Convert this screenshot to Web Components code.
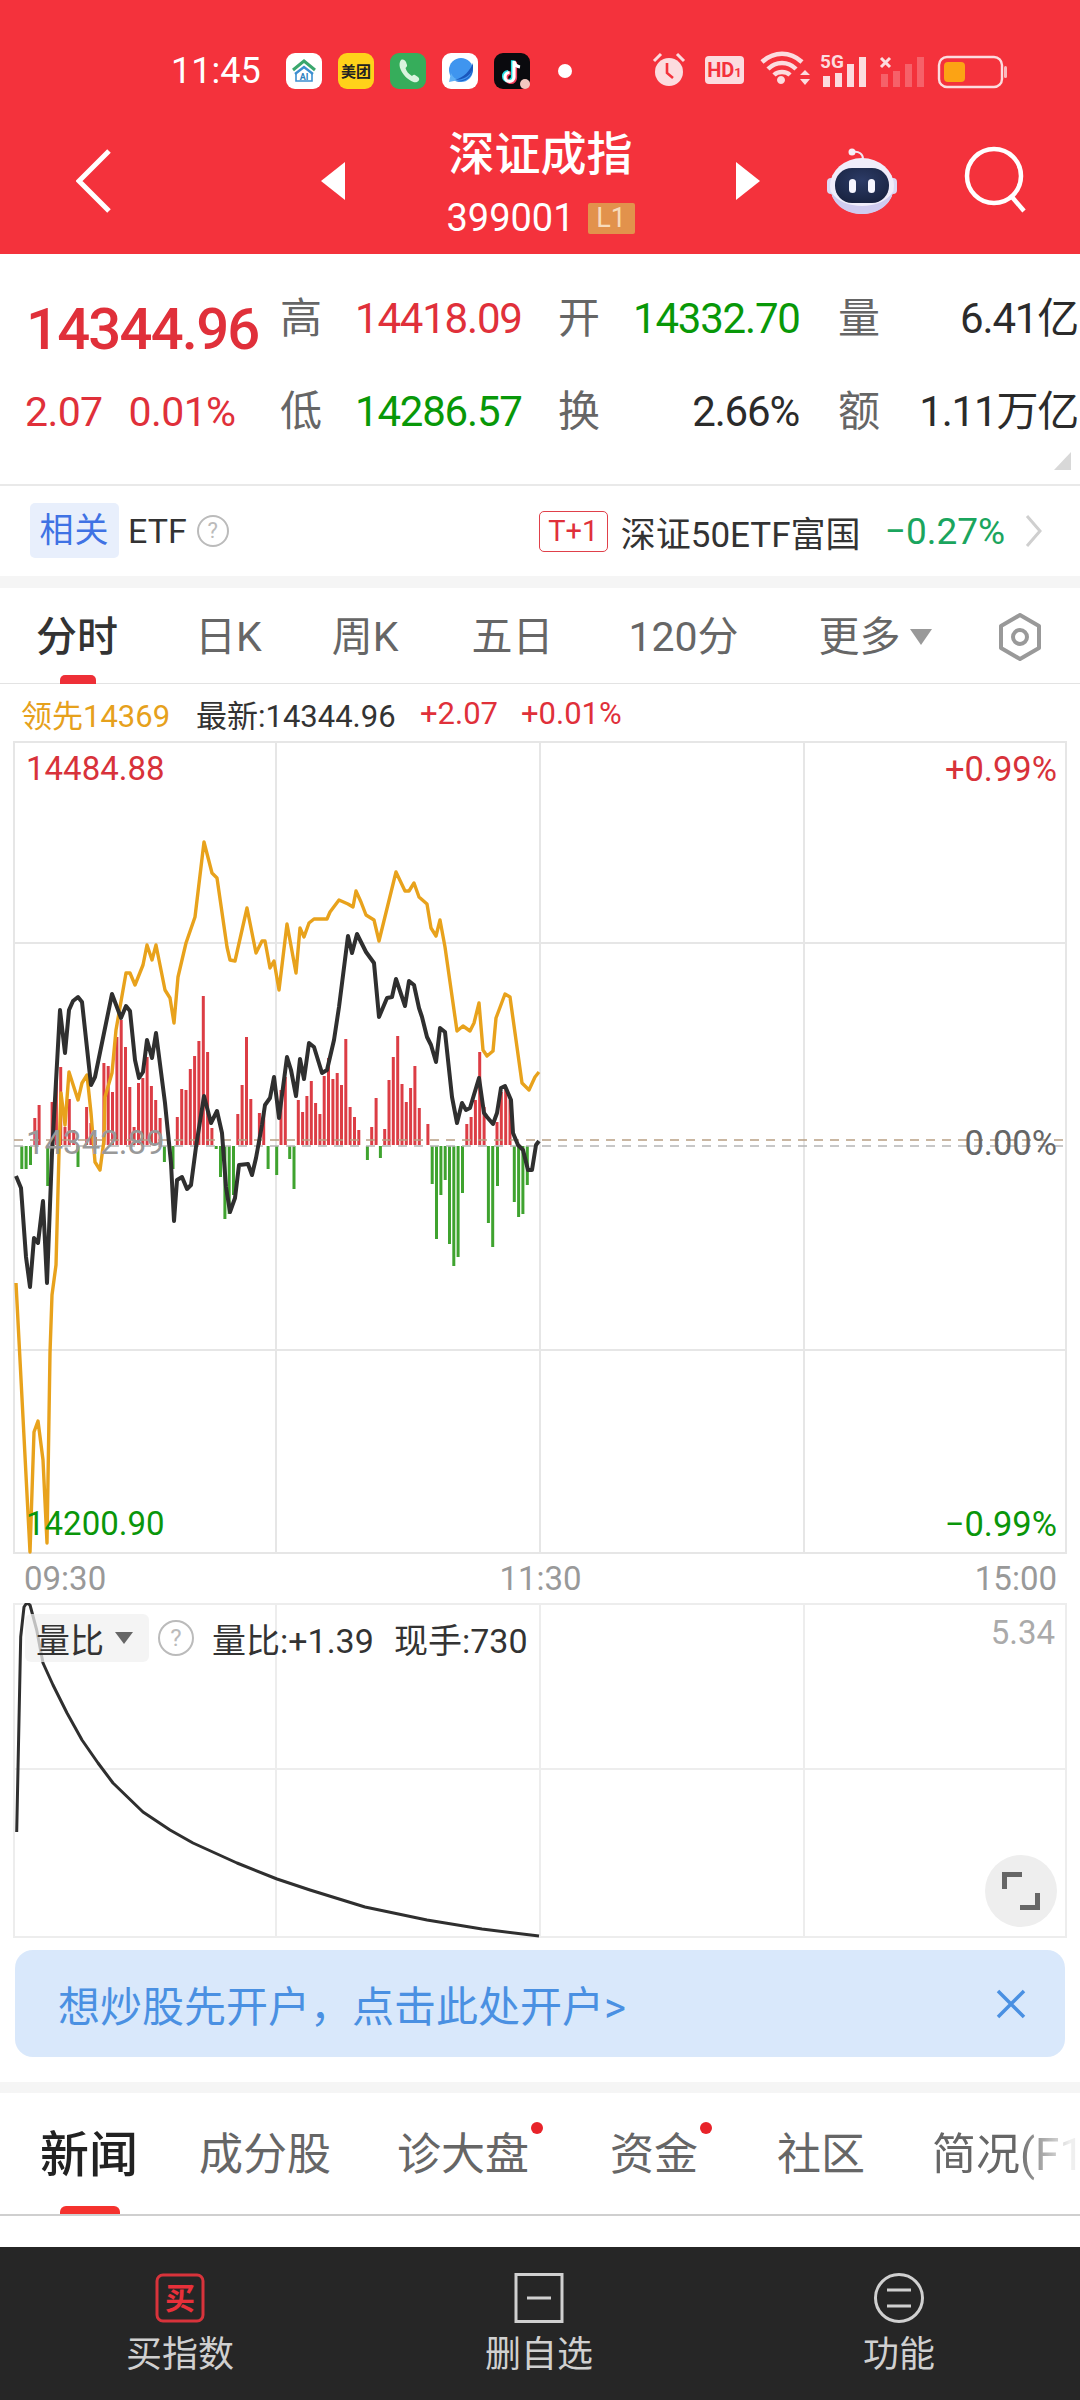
<!DOCTYPE html>
<html lang="zh">
<head>
<meta charset="utf-8">
<title>深证成指</title>
<style>
  html, body { margin: 0; padding: 0; background: #fff; }
  body { width: 1080px; height: 2400px; overflow: hidden; font-family: Roboto, "Noto Sans CJK SC", sans-serif; color: #333; }
</style>
</head>
<body>
<red-header>
  <span slot="title">深证成指</span>
  <span slot="code">399001</span>
  <span slot="level">L1</span>
</red-header>
<quote-panel></quote-panel>
<etf-row></etf-row>
<period-tabs>
  <period-tab active>分时</period-tab>
  <period-tab style="margin-left:77px">日K</period-tab>
  <period-tab style="margin-left:70px">周K</period-tab>
  <period-tab style="margin-left:73px">五日</period-tab>
  <period-tab style="margin-left:75px">120分</period-tab>
</period-tabs>
<chart-legend></chart-legend>
<intraday-chart></intraday-chart>
<time-axis></time-axis>
<ratio-chart></ratio-chart>
<promo-banner>想炒股先开户，点击此处开户&gt;</promo-banner>
<info-tabs>
  <info-tab active style="font-size:49px;color:#222;width:95px;margin-top:5px">新闻</info-tab>
  <info-tab style="margin-left:64px">成分股</info-tab>
  <info-tab dot style="margin-left:66px">诊大盘</info-tab>
  <info-tab dot style="margin-left:81px">资金</info-tab>
  <info-tab style="margin-left:79px">社区</info-tab>
  <info-tab fade style="margin-left:67px">简况(F10)</info-tab>
</info-tabs>
<bottom-bar>
  <bar-action>
    <svg slot="icon" width="50" height="50" viewBox="0 0 50 50"><rect x="2" y="2" width="46" height="46" rx="6" fill="none" stroke="#d8333b" stroke-width="3"/><text x="25" y="36" text-anchor="middle" font-size="30" font-weight="700" fill="#e8303a" font-family="Noto Sans CJK SC">买</text></svg>
    买指数
  </bar-action>
  <bar-action>
    <svg slot="icon" width="50" height="50" viewBox="0 0 50 50"><rect x="2" y="1.5" width="46" height="47" fill="none" stroke="#d0d0d0" stroke-width="3"/><path d="M13 25h24" stroke="#d0d0d0" stroke-width="3"/></svg>
    删自选
  </bar-action>
  <bar-action>
    <svg slot="icon" width="50" height="50" viewBox="0 0 50 50"><circle cx="25" cy="25" r="23.5" fill="none" stroke="#d0d0d0" stroke-width="3"/><path d="M13 17h24M13 33h24" stroke="#d0d0d0" stroke-width="3"/></svg>
    功能
  </bar-action>
</bottom-bar>

<script>
// small helper: every plain element is only a template in an open shadow root
function defineSimple(name, html) {
  const template = document.createElement('template');
  template.innerHTML = html;
  customElements.define(name, class extends HTMLElement {
    constructor() {
      super();
      this.attachShadow({ mode: 'open' }).appendChild(template.content.cloneNode(true));
    }
  });
}

defineSimple('status-bar', `
  <style>
    :host { display: flex; align-items: center; height: 108px; padding: 34px 0 0 171px; box-sizing: border-box; color: #fff; }
    .time { font-size: 36px; width: 115px; line-height: 40px; }
    .apps { display: flex; gap: 16px; }
    svg { display: block; flex: none; }
    .dot { width: 14px; height: 14px; border-radius: 50%; background: #fff; margin-left: 28px; }
  </style>
  <span class="time">11:45</span>
  <div class="apps">
    <svg width="36" height="36" viewBox="0 0 36 36"><rect width="36" height="36" rx="9" fill="#fff"/><path d="M7 17 18 8l11 9" fill="none" stroke="#3aa76d" stroke-width="3"/><path d="M9 21l9-7 9 7" fill="none" stroke="#3c8fd0" stroke-width="2.4"/><path d="M10 21v7h16v-7" fill="none" stroke="#3c8fd0" stroke-width="1.6"/><text x="18" y="27" text-anchor="middle" font-size="9" font-weight="700" fill="#2e7fc0" font-family="Roboto">AI</text></svg>
    <svg width="36" height="36" viewBox="0 0 36 36"><rect width="36" height="36" rx="9" fill="#ffd21a"/><text x="18" y="23.5" text-anchor="middle" font-size="15" font-weight="700" fill="#222" font-family="Noto Sans CJK SC">美团</text></svg>
    <svg width="36" height="36" viewBox="0 0 36 36"><rect width="36" height="36" rx="9" fill="#36ad5b"/><path d="M11 7c2-1 4 0 5 2l1 3c.4 1.200-.4 2-1.500 3 .8 3 3 6 6.500 8 1-1 2-1.600 3-1l3 2c1.500 1 1.600 3 .4 4-2 2-5 1.500-8-.5-5-3-9-8-10.500-13-.7-2.800-.4-6 1.100-7.500z" fill="#d9f3df"/></svg>
    <svg width="36" height="36" viewBox="0 0 36 36"><rect width="36" height="36" rx="9" fill="#fff"/><circle cx="19" cy="17" r="12" fill="#3f95ef"/><path d="M30 12c1 5-1 10-5 13-3 2-7 3-12 3 7 2 18-2 18-13z" fill="#1d5fc6"/><path d="M7 29l2-9c2 4 4 6 8 7z" fill="#5fb0f5"/><path d="M31 10C28 18 22 24 13 27c8 0 16-4 18-12z" fill="#1a57bd"/></svg>
    <svg width="36" height="36" viewBox="0 0 36 36"><rect width="36" height="36" rx="9" fill="#0a0a0e"/><path d="M20 8v16a4.500 4.500 0 1 1-4.500-4.500" fill="none" stroke="#25e0e6" stroke-width="3.600" transform="translate(-1.300 -.8)"/><path d="M20 8v16a4.500 4.500 0 1 1-4.500-4.500" fill="none" stroke="#f43e5c" stroke-width="3.600" transform="translate(1.300 .8)"/><path d="M20 8v16a4.500 4.500 0 1 1-4.500-4.500M20 8c.5 3.500 3 5.500 6 6" fill="none" stroke="#fff" stroke-width="3.200"/><circle cx="31" cy="31" r="5" fill="#f2c7c0"/></svg>
  </div>
  <span class="dot"></span>
  <svg width="360" height="40" viewBox="0 0 360 40" style="margin-left:78px">
    <g fill="#fcdcdf">
      <g transform="translate(2 0)">
        <circle cx="17" cy="21" r="14"/>
        <path d="M2 10 9 3M32 10l-7-7" stroke="#fcdcdf" stroke-width="3"/>
        <path d="M15 12v10l6 5" fill="none" stroke="#f4323c" stroke-width="2.600"/>
      </g>
      <rect x="55" y="5" width="39" height="28" rx="4"/>
      <g transform="translate(-2 0)">
        <path d="M133 25a4 4 0 1 0 .01 0z"/>
        <path d="M114 11c12-11 28-11 40 0M120 18c8-8 20-8 28 0M126 24c4-4 12-4 16 0" fill="none" stroke="#fcdcdf" stroke-width="4.500"/>
        <path d="M152 24h10l-5-5zM152 28h10l-5 6z"/>
      </g>
      <text x="170" y="17" font-size="19" font-weight="700" font-family="Roboto">5G</text>
      <rect x="173" y="25" width="7" height="11"/><rect x="185" y="22" width="7" height="14"/><rect x="197" y="13" width="7" height="23"/><rect x="209" y="6" width="7" height="30"/>
      <g opacity=".28"><rect x="231" y="23" width="7" height="13"/><rect x="243" y="20" width="7" height="16"/><rect x="255" y="13" width="7" height="23"/><rect x="267" y="6" width="7" height="30"/></g>
      <path d="M231 7l9 9M240 7l-9 9" stroke="#fcdcdf" stroke-width="3"/>
      <rect x="289" y="6" width="63" height="30" rx="8" fill="none" stroke="#fcdcdf" stroke-width="2.400"/>
      <rect x="354" y="15" width="3" height="12" rx="1.500" opacity=".8"/>
    </g>
    <rect x="294" y="11" width="21" height="20" rx="4" fill="#fca314"/>
    <text x="74.500" y="26" text-anchor="middle" font-size="20" font-weight="700" fill="#f4323c" font-family="Roboto">HD<tspan font-size="13">1</tspan></text>
  </svg>
`);

defineSimple('red-header', `
  <style>
    :host { display: block; background: #f4323c; height: 254px; color: #fff; }
    nav { display: flex; align-items: center; height: 146px; padding-left: 76px; }
    svg { display: block; flex: none; }
    .center { width: 391px; align-self: flex-start; margin-top: 19px; text-align: center; }
    .title { font-size: 46px; line-height: 54px; font-weight: 500; }
    .line { display: flex; justify-content: center; align-items: center; gap: 13px; margin-top: 19px; height: 36px; font-size: 38px; }
    .lv { background: #e2924c; color: #f8dcbc; width: 47px; height: 31px; line-height: 31px; font-size: 27px; border-radius: 2px; text-align: center; }
  </style>
  <status-bar></status-bar>
  <nav>
    <svg width="36" height="64" viewBox="0 0 36 64"><path d="M33 2 3 32l30 30" fill="none" stroke="#fff" stroke-width="5" stroke-linejoin="miter"/></svg>
    <svg style="margin-left:209px" width="24" height="38" viewBox="0 0 24 38"><path d="M24 0v38L0 19z" fill="#fff"/></svg>
    <div class="center">
      <div class="title"><slot name="title"></slot></div>
      <div class="line"><span><slot name="code"></slot></span><span class="lv"><slot name="level"></slot></span></div>
    </div>
    <svg width="24" height="38" viewBox="0 0 24 38"><path d="M0 0v38l24-19z" fill="#fff"/></svg>
    <svg style="margin-left:66px" width="72" height="66" viewBox="0 0 72 66">
      <defs><radialGradient id="face" cx=".5" cy=".35" r=".7"><stop offset="0" stop-color="#2c3b66"/><stop offset="1" stop-color="#18223f"/></radialGradient></defs>
      <path d="M27 4c6-1 10 2 10 7" fill="none" stroke="#f2e8f4" stroke-width="2"/><circle cx="26" cy="4" r="3.500" fill="#f5eef6"/>
      <rect x="1" y="30" width="8" height="16" rx="4" fill="#dcd9f4"/><rect x="63" y="30" width="8" height="16" rx="4" fill="#dcd9f4"/>
      <ellipse cx="36" cy="38" rx="32" ry="28" fill="#f0edfa"/>
      <path d="M5 44c3 14 16 22 31 22s28-8 31-22c-6 9-18 14-31 14S11 53 5 44z" fill="#cfcbef"/>
      <rect x="9" y="20" width="54" height="35" rx="17" fill="url(#face)"/>
      <rect x="23" y="31" width="7" height="14" rx="3.500" fill="#f6f6ff"/><rect x="42" y="31" width="7" height="14" rx="3.500" fill="#f6f6ff"/>
    </svg>
    <svg style="margin-left:64px" width="66" height="70" viewBox="0 0 66 70"><circle cx="32" cy="30" r="27" fill="none" stroke="#fff" stroke-width="4.500"/><path d="M50 51l12 14" stroke="#fff" stroke-width="4.500"/></svg>
  </nav>
`);

defineSimple('quote-panel', `
  <style>
    :host { display: block; position: relative; height: 230px; box-sizing: content-box; border-bottom: 2px solid #e9e9e9; }
    .grid { display: grid; grid-template-columns: 253px 76px 202px 76px 204px 76px 1fr; grid-auto-rows: 93px; padding: 18px 2px 0 28px; align-items: center; font-size: 42px; letter-spacing: -1.2px; line-height: 44px; white-space: nowrap; }
    .l { font-size: 42px; letter-spacing: 0; color: #666; margin-left: -1px; }
    .big { font-size: 58px; font-weight: 500; letter-spacing: -1.8px; color: #e0303a; line-height: 60px; margin: 20px 0 0 -2px; }
    .r, .g { margin-left: -2px; }
    .r { color: #e0303a; } .g { color: #089808; } .k { color: #2b2b2b; }
    .end { text-align: right; } .e40 { padding-right: 40px; }
    .sub { color: #e0303a; display: flex; gap: 26px; margin-left: -3px; font-size: 41px; letter-spacing: -.6px; }
    .corner { position: absolute; right: 9px; bottom: 14px; width: 0; height: 0; border-left: 17px solid transparent; border-bottom: 18px solid #d8d8d8; }
  </style>
  <div class="grid">
    <span class="big">14344.96</span><span class="l">高</span><span class="r">14418.09</span><span class="l">开</span><span class="g">14332.70</span><span class="l">量</span><span class="k end">6.41亿</span>
    <span class="sub"><span>2.07</span><span>0.01%</span></span><span class="l">低</span><span class="g">14286.57</span><span class="l">换</span><span class="k end e40">2.66%</span><span class="l">额</span><span class="k end">1.11万亿</span>
  </div>
  <i class="corner"></i>
`);

defineSimple('etf-row', `
  <style>
    :host { display: flex; align-items: center; height: 90px; padding-left: 30px; box-sizing: content-box; border-bottom: 12px solid #f5f5f5; font-size: 34px; color: #333; white-space: nowrap; }
    .tag { background: #e8effc; color: #3f72e4; width: 89px; height: 55px; line-height: 55px; text-align: center; border-radius: 5px; letter-spacing: 1px; margin-top: -1px; }
    .etf { margin-left: 9px; }
    .q { width: 28px; height: 28px; margin-left: 10px; border: 2px solid #bbb; border-radius: 50%; color: #bbb; font-size: 22px; line-height: 28px; text-align: center; }
    .t1 { margin-left: 310px; width: 67px; height: 39px; line-height: 38px; border: 1px solid #e0404a; border-radius: 5px; color: #e0303a; font-size: 29px; text-align: center; }
    .name { margin-left: 13px; width: 264px; font-size: 35px; }
    .pct { color: #1ba55e; font-size: 37px; }
    svg { margin-left: 20px; }
  </style>
  <span class="tag">相关</span><span class="etf">ETF</span><span class="q">?</span>
  <span class="t1">T+1</span><span class="name">深证50ETF富国</span><span class="pct">−0.27%</span>
  <svg width="17" height="34" viewBox="0 0 17 34"><path d="M2 2l13 15L2 32" fill="none" stroke="#cfcfcf" stroke-width="3"/></svg>
`);

defineSimple('period-tabs', `
  <style>
    :host { display: flex; align-items: center; height: 93px; padding: 2px 0 0 36px; border-bottom: 1px solid #e3e3e3; }
    .more { margin-left: 80px; font-size: 41px; color: #666; line-height: 50px; }
    .tri { width: 0; height: 0; margin-left: 9px; border-left: 11px solid transparent; border-right: 11px solid transparent; border-top: 16px solid #999; }
    svg { margin-left: 63px; display: block; }
  </style>
  <slot></slot>
  <span class="more">更多</span><i class="tri"></i>
  <svg width="50" height="48" viewBox="0 0 50 48"><path d="M25 2l19 11v22L25 46 6 35V13z" fill="none" stroke="#999" stroke-width="4" stroke-linejoin="round"/><circle cx="25" cy="24" r="7" fill="none" stroke="#999" stroke-width="4"/></svg>
`);

class PeriodTab extends HTMLElement {
  constructor() {
    super();
    this.attachShadow({ mode: 'open' }).innerHTML = `
      <style>
        :host { display: block; position: relative; font-size: 41px; line-height: 50px; color: #666; white-space: nowrap; }
        :host([active]) { color: #333; font-weight: 500; }
        :host([active])::after { content: ""; position: absolute; left: 24px; bottom: -22px; width: 36px; height: 9px; background: #ee2f37; border-radius: 5px 5px 0 0; }
      </style>
      <slot></slot>`;
  }
}
customElements.define('period-tab', PeriodTab);

defineSimple('chart-legend', `
  <style>
    :host { display: flex; align-items: center; height: 56px; box-sizing: border-box; padding: 2px 0 0 21px; font-size: 31px; color: #333; white-space: nowrap; }
    .o { color: #e6a11c; width: 175px; } .n { width: 224px; } .r { color: #e0303a; width: 101px; }
  </style>
  <span class="o">领先14369</span><span class="n">最新:14344.96</span><span class="r">+2.07</span><span class="r">+0.01%</span>
`);

// price line and volume bars are traced from the picture, in page coordinates
const ORANGE = [[16,1283],[30,1552],[34,1432],[38,1421],[43,1460],[47,1543],[50,1353],[52,1295],[56,1265],[59,1153],[61,1093],[65,1125],[69,1072],[78,1100],[82,1083],[87,1075],[91,1113],[95,1162],[100,1170],[104,1140],[105,1097],[112,1073],[116,1030],[126,973],[130,973],[135,985],[143,965],[147,945],[152,960],[156,945],[165,990],[170,998],[174,1023],[178,977],[186,943],[195,917],[204,842],[212,873],[217,878],[227,947],[230,960],[235,961],[247,908],[253,938],[256,953],[262,941],[265,941],[270,968],[274,961],[279,990],[287,924],[296,973],[300,928],[304,937],[309,923],[314,919],[327,919],[330,912],[339,900],[348,904],[353,907],[356,891],[361,902],[366,915],[374,920],[379,941],[396,872],[405,891],[409,891],[414,883],[419,897],[427,904],[431,928],[436,936],[440,920],[445,947],[457,1031],[463,1026],[470,1031],[474,1023],[479,1003],[483,1050],[487,1056],[493,1051],[496,1018],[505,994],[510,997],[522,1083],[529,1090],[535,1077],[539,1072]];
const BLACK = [[16,1176],[21,1188],[26,1257],[30,1287],[34,1238],[38,1243],[43,1201],[47,1283],[52,1153],[60,1010],[65,1053],[69,1010],[73,1001],[78,997],[82,1002],[91,1085],[95,1077],[112,994],[121,1018],[126,1006],[130,1011],[135,1060],[139,1078],[143,1072],[147,1040],[152,1058],[156,1033],[165,1103],[171,1163],[174,1221],[177,1180],[182,1177],[187,1189],[191,1185],[196,1147],[204,1096],[211,1123],[217,1111],[222,1133],[226,1187],[230,1212],[235,1198],[239,1165],[248,1164],[252,1175],[256,1158],[262,1125],[265,1105],[270,1098],[274,1077],[279,1118],[287,1057],[291,1070],[296,1096],[300,1059],[304,1079],[309,1043],[314,1047],[322,1073],[327,1070],[334,1040],[339,1007],[348,936],[352,953],[357,934],[366,952],[374,963],[379,1017],[387,998],[392,997],[396,979],[405,1006],[409,981],[414,985],[419,1008],[422,1017],[427,1037],[431,1045],[436,1062],[440,1028],[445,1032],[452,1097],[457,1123],[462,1103],[466,1110],[470,1108],[479,1078],[484,1113],[487,1117],[493,1124],[497,1113],[501,1088],[505,1086],[511,1100],[513,1133],[518,1145],[523,1150],[528,1170],[532,1170],[536,1145],[539,1141]];
// index -> height; above the axis is red, below is green
const UP = {4:27,5:40,8:43,9:65,10:78,11:18,12:46,13:15,16:38,17:22,18:8,20:82,21:79,22:53,23:108,24:125,25:98,26:58,27:18,28:62,29:67,30:88,31:59,32:45,33:27,37:28,38:56,39:55,40:76,41:89,42:104,43:149,44:93,45:17,51:31,52:60,53:108,54:46,56:32,57:32,61:55,62:68,65:45,66:33,67:49,68:64,69:42,70:31,71:69,72:87,73:66,74:72,75:60,76:106,77:38,78:28,79:15,82:18,83:47,85:16,86:65,87:88,88:109,89:61,90:43,91:57,92:79,93:37,95:21,104:21,105:28,106:45,107:93,108:38,111:23,112:53,113:57,114:45};
const DOWN = {1:23,2:23,3:19,7:40,14:21,34:16,36:23,46:3,47:31,48:73,49:68,50:49,58:23,60:29,63:13,64:43,81:14,84:12,96:38,97:93,98:49,99:34,100:98,101:120,102:111,103:47,109:77,110:101,111.1:40,115:56,116:71,117:68,118:39};

class IntradayChart extends HTMLElement {
  constructor() {
    super();
    const shadow = this.attachShadow({ mode: 'open' });
    const line = pts => pts.map(p => p.join(',')).join(' ');
    let bars = '';
    for (const i in UP) bars += `<rect x="${(16 + 4.32 * i).toFixed(1)}" y="${1145 - UP[i]}" width="3" height="${UP[i]}" fill="#dc3d45"/>`;
    for (const i in DOWN) bars += `<rect x="${(16 + 4.32 * i).toFixed(1)}" y="1146" width="3" height="${DOWN[i]}" fill="#3fa32f"/>`;
    shadow.innerHTML = `
      <style>
        :host { display: block; position: relative; height: 814px; }
        svg { display: block; }
        span { position: absolute; font-size: 33px; line-height: 36px; }
        .l { left: 26px; } .rt { right: 23px; font-size: 34.500px; }
        .red { color: #d8323a; } .green { color: #0a960a; } .gray { color: #999; } .dark { color: #666; }
      </style>
      <svg width="1080" height="814" viewBox="0 740 1080 814">
        <path d="M14 742H1066V1553H14ZM276 742V1553M540 742V1553M804 742V1553M14 943H1066M14 1350H1066" fill="none" stroke="#e6e6e6" stroke-width="2"/>
        ${bars}
        <path d="M14 1140H1066" stroke="#b89f83" stroke-width="1.500" stroke-dasharray="9 7"/>
        <path d="M14 1146H1066" stroke="#b5b5b5" stroke-width="1.500" stroke-dasharray="9 7"/>
        <polyline points="${line(ORANGE)}" fill="none" stroke="#e8a21c" stroke-width="3.400" stroke-linejoin="round"/>
        <polyline points="${line(BLACK)}" fill="none" stroke="#2f2f2f" stroke-width="4" stroke-linejoin="round"/>
      </svg>
      <span class="l red" style="top:11px">14484.88</span>
      <span class="rt red" style="top:11px">+0.99%</span>
      <span class="l gray" style="top:385px">14342.89</span>
      <span class="rt dark" style="top:385px">0.00%</span>
      <span class="l green" style="top:766px">14200.90</span>
      <span class="rt green" style="top:766px">−0.99%</span>`;
  }
}
customElements.define('intraday-chart', IntradayChart);

defineSimple('time-axis', `
  <style>
    :host { display: flex; justify-content: space-between; height: 49px; padding: 0 23px 0 24px; align-items: center; font-size: 33px; color: #999; }
  </style>
  <span>09:30</span><span>11:30</span><span>15:00</span>
`);

class RatioChart extends HTMLElement {
  constructor() {
    super();
    const curve = [[16.700,1832],[20.700,1637],[24,1607],[26.700,1603],[30,1605],[36.700,1630],[43,1663],[53,1685],[67,1713],[82,1740],[98,1763],[113,1783],[143,1812],[170,1830],[193,1843],[237,1863],[277,1879],[310,1890],[365,1907],[427,1920],[482,1929],[539,1936]];
    this.attachShadow({ mode: 'open' }).innerHTML = `
      <style>
        :host { display: block; position: relative; height: 335px; }
        svg { display: block; }
        .bar { position: absolute; left: 25px; top: 11px; display: flex; align-items: center; height: 48px; font-size: 34px; color: #333; white-space: nowrap; }
        .chip { display: flex; align-items: center; width: 124px; height: 48px; background: rgba(240,240,240,.75); border-radius: 6px; padding-left: 11px; box-sizing: border-box; }
        .tri { width: 0; height: 0; margin-left: 11px; border-left: 9px solid transparent; border-right: 9px solid transparent; border-top: 12px solid #666; }
        .q { width: 32px; height: 32px; margin-left: 9px; border: 2px solid #bbb; border-radius: 50%; color: #bbb; font-size: 24px; line-height: 32px; text-align: center; }
        .a { margin-left: 18px; width: 182px; }
        .max { position: absolute; right: 25px; top: 12px; font-size: 33px; line-height: 36px; color: #aaa; }
        .full { position: absolute; left: 985px; top: 252px; width: 72px; height: 72px; border-radius: 50%; background: #eee; display: flex; align-items: center; justify-content: center; }
      </style>
      <svg width="1080" height="335" viewBox="0 1603 1080 335">
        <path d="M14 1604H1066V1937H14ZM276 1604V1937M540 1604V1937M804 1604V1937M14 1769H1066" fill="none" stroke="#ededed" stroke-width="2"/>
        <polyline points="${curve.map(p => p.join(',')).join(' ')}" fill="none" stroke="#2f2f2f" stroke-width="3" stroke-linejoin="round"/>
      </svg>
      <div class="bar">
        <span class="chip">量比<i class="tri"></i></span><span class="q">?</span>
        <span class="a">量比:+1.39</span><span>现手:730</span>
      </div>
      <span class="max">5.34</span>
      <div class="full"><svg width="38" height="38" viewBox="0 0 38 38"><path d="M2.500 17V2.500H20M35.500 21V35.500H18" fill="none" stroke="#666" stroke-width="5"/></svg></div>`;
  }
}
customElements.define('ratio-chart', RatioChart);

defineSimple('promo-banner', `
  <style>
    :host { display: block; padding: 12px 15px 25px; border-bottom: 11px solid #f5f5f5; }
    .box { display: flex; align-items: center; justify-content: space-between; height: 107px; padding: 0 39px 0 43px; background: #d9e8fb; border-radius: 18px; color: #4a90e2; font-size: 42px; white-space: nowrap; }
    svg { display: block; }
  </style>
  <div class="box"><span><slot></slot></span>
    <svg width="30" height="30" viewBox="0 0 30 30"><path d="M2 2l26 26M28 2 2 28" stroke="#4a90e2" stroke-width="3.500"/></svg>
  </div>
`);

defineSimple('info-tabs', `
  <style>
    :host { display: flex; align-items: center; height: 121px; padding-left: 40px; overflow: hidden; border-bottom: 2px solid #cfcfcf; margin-bottom: 31px; }
  </style>
  <slot></slot>
`);

class InfoTab extends HTMLElement {
  constructor() {
    super();
    this.attachShadow({ mode: 'open' }).innerHTML = `
      <style>
        :host { display: block; position: relative; flex: none; font-size: 44px; line-height: 60px; color: #666; white-space: nowrap; margin-top: 3px; }
        :host([active]) { font-weight: 500; }
        :host([active])::after { content: ""; position: absolute; left: 20px; bottom: -32px; width: 60px; height: 12px; background: #f5322e; border-radius: 6px 6px 0 0; }
        :host([dot])::before { content: ""; position: absolute; right: -14px; top: -3px; width: 12px; height: 12px; border-radius: 50%; background: #e8232a; }
        :host([fade]) { -webkit-mask-image: linear-gradient(90deg, #000 44%, rgba(0,0,0,.1) 72%); mask-image: linear-gradient(90deg, #000 44%, rgba(0,0,0,.1) 72%); }
      </style>
      <slot></slot>`;
  }
}
customElements.define('info-tab', InfoTab);

defineSimple('bottom-bar', `
  <style>
    :host { display: grid; grid-template-columns: 360px 358px 362px; height: 153px; background: #262626; }
  </style>
  <slot></slot>
`);

class BarAction extends HTMLElement {
  constructor() {
    super();
    this.attachShadow({ mode: 'open' }).innerHTML = `
      <style>
        :host { display: flex; flex-direction: column; align-items: center; padding-top: 26px; box-sizing: border-box; font-size: 36px; line-height: 44px; color: #d0d0d0; }
        .i { height: 50px; margin-bottom: 10px; }
      </style>
      <div class="i"><slot name="icon"></slot></div>
      <slot></slot>`;
  }
}
customElements.define('bar-action', BarAction);
</script>
</body>
</html>
